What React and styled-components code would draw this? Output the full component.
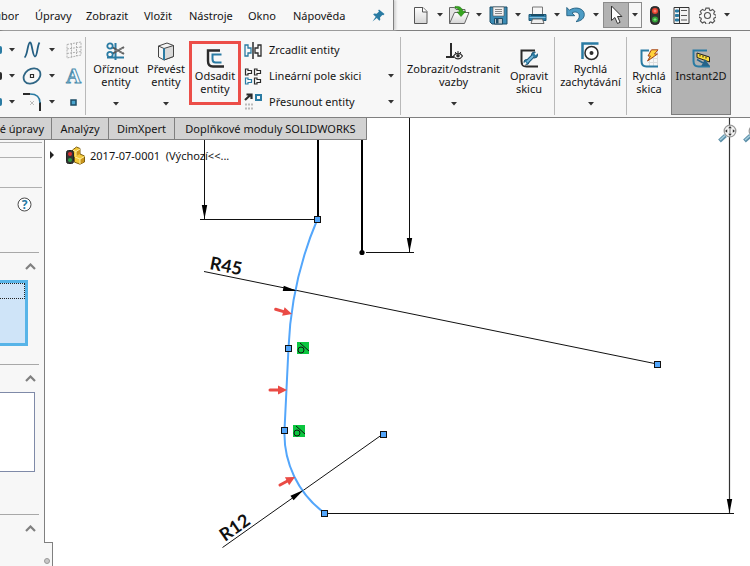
import React from 'react';
import styled, { createGlobalStyle } from 'styled-components';

const GlobalStyle = createGlobalStyle`
    * {
        box-sizing: border-box;
    }
    body {
        margin: 0;
        color: #141414;
        background: #fff;
        font-family: "Noto Sans", "Open Sans", sans-serif;
        font-size: 11px;
        line-height: 13px;
    }
    button {
        margin: 0;
        padding: 0;
        border: 0;
        color: inherit;
        background: none;
        font: inherit;
        white-space: nowrap;
    }
    ul {
        margin: 0;
        padding: 0;
        list-style: none;
    }
    svg {
        display: block;
        flex: none;
    }
`;

const blue = '#2a7ba3';
const dark = '#2b2b2b';
const edge = '#808080';

const Page = styled.div`
    display: flex;
    flex-direction: column;
    min-height: 100vh;
    overflow: hidden;
`;

/* top bar */
const TopBar = styled.header`
    display: flex;
    height: 31px;
    background: #f7f7f7;
    border-bottom: 1px solid ${edge};
`;
const Menu = styled.nav`
    display: grid;
    grid-template-columns: 19px 16px 51px 58px 45px 59px 45px 75px 25px;
    align-items: center;
    padding-top: 1px;
    border-right: 1px solid ${edge};
    box-shadow: 2px 0 2px #d4d4d4;
`;
const MenuItem = styled.button`
    text-align: left;
`;
const ClippedItem = styled.div`
    display: flex;
    justify-content: flex-end;
    overflow: hidden;
`;
const QuickTools = styled.div`
    display: flex;
    align-items: center;
    padding-left: 16px;
`;
const SplitTool = styled.div`
    display: flex;
    align-items: center;
    width: 39px;
`;
const IconButton = styled.button`
    display: flex;
    align-items: center;
    justify-content: center;
    width: ${({ $w }) => $w || 20}px;
    height: 26px;
`;
const CaretButton = styled.button`
    display: flex;
    align-items: center;
    justify-content: center;
    width: ${({ $w }) => $w || 19}px;
    height: 24px;
`;
const SelectTool = styled.div`
    display: flex;
    margin-left: -2px;
    margin-right: 3px;
    border: 1px solid #8c8c8c;

    ${IconButton} {
        height: 24px;
        background: #b2b2b2;
        border-right: 1px solid #8c8c8c;
    }
`;

/* ribbon */
const Ribbon = styled.div`
    display: flex;
    height: 87px;
    padding-top: 6px;
    background: #f7f7f7;
    border-bottom: 1px solid ${edge};
`;
const Group = styled.div`
    display: flex;
    height: 78px;
    padding-left: ${({ $left }) => $left || 0}px;
    border-right: 1px solid #b9b9b9;
`;
const SketchGrid = styled.div`
    display: grid;
    grid-template-columns: 2px 20px 20px 20px 23px;
    grid-template-rows: repeat(3, 26px);
    align-items: center;
    justify-items: center;
    overflow: hidden;
`;
const Stub = styled.span`
    width: 2px;
    height: 8px;
    border-radius: 0 2px 2px 0;
    background: ${({ $color }) => $color};
`;
const BigButton = styled.button`
    display: flex;
    flex-direction: column;
    align-items: center;
    width: ${({ $w }) => $w}px;
    padding-top: ${({ $low }) => ($low ? 12 : 5)}px;

    svg {
        margin-bottom: 1px;
    }
`;
const Highlight = styled(BigButton)`
    height: 64px;
    margin-top: 4px;
    padding-top: 5px;
    border: 3px solid #ec4e48;
`;
const Active = styled(BigButton)`
    height: 78px;
    padding-top: 11px;
    background: #b2b2b2;
    border: 1px solid #7d7d7d;
`;
const CaretRow = styled.span`
    display: flex;
    align-items: center;
    height: 18px;
    margin-top: 7px;
`;
const ToolList = styled.div`
    display: grid;
    grid-template-columns: 28px 113px 18px;
    grid-template-rows: repeat(3, 26px);
    align-items: center;
`;
const ToolLabel = styled.button`
    padding-bottom: 2px;
    text-align: left;
`;

/* work area */
const Work = styled.main`
    display: grid;
    flex: 1;
    grid-template-columns: minmax(0, 1fr);
    overflow: hidden;
    background: #fff;

    > * {
        grid-area: 1 / 1;
    }
`;
const Canvas = styled.svg`
    width: 100%;
    height: 100%;
    min-height: 448px;
`;
const Overlay = styled.div`
    z-index: 1;
    display: flex;
    flex-direction: column;
`;
const OverlayTop = styled.div`
    display: flex;
    justify-content: space-between;
    height: 22px;
`;
const Tabs = styled.div`
    display: flex;
    background: #d2d2d2;
    border-bottom: 1px solid ${edge};
`;
const Tab = styled.button`
    display: flex;
    align-items: center;
    justify-content: ${({ $end }) => ($end ? 'flex-end' : 'center')};
    width: ${({ $w }) => $w}px;
    padding-right: ${({ $end }) => ($end ? 7 : 0)}px;
    overflow: hidden;
    border-right: 1px solid ${edge};
`;
const ViewTools = styled.div`
    display: flex;
    gap: 6px;
    margin-right: -12px;
    padding-top: 2px;
`;
const Columns = styled.div`
    display: flex;
    flex: 1;
`;
const Side = styled.aside`
    display: flex;
    flex-direction: column;
    width: 45px;
`;
const Panel = styled.div`
    flex: 1;
    background: #f7f7f7;
    border-right: 1px solid ${edge};
`;
const Strip = styled.div`
    height: ${({ $h }) => $h}px;
    margin-right: 2px;
    border-bottom: 1px solid #b0b0b0;
`;
const HelpRow = styled.div`
    display: flex;
    align-items: flex-start;
    justify-content: flex-end;
    height: 64px;
    padding: 9px 12px 0 0;
`;
const Section = styled.section`
    height: ${({ $h }) => $h}px;
    margin-right: 5px;
    border-top: 1px solid #a8a8a8;
`;
const Collapse = styled.button`
    display: flex;
    align-items: center;
    justify-content: flex-end;
    width: 100%;
    height: 27px;
    padding-right: 3px;
`;
const SelectionBox = styled.ul`
    width: 28px;
    height: 66px;
    background: #cfe4f8;
    border: solid #57b4e8;
    border-width: 3px 3px 3px 0;
`;
const Selection = styled.li`
    height: 16px;
    border: 1px dotted #222;
    border-left: 0;
`;
const ListBox = styled.ul`
    width: 35px;
    height: 80px;
    background: #fff;
    border: 1px solid #7f8aa8;
    border-left: 0;
`;
const Foot = styled.div`
    display: flex;
    width: 53px;
    height: 24px;
    background: #f7f7f7;
`;
const Ledge = styled.div`
    display: flex;
    align-items: center;
    width: 9px;
    margin-left: 44px;
    padding-top: 12px;
    border-top: 1px solid ${edge};
    border-right: 1px solid ${edge};
`;
const Dot = styled.span`
    width: 6px;
    height: 6px;
    background: #c8c8c8;
    border: 1px solid #999;
    border-radius: 50%;
`;
const TreeRow = styled.div`
    display: flex;
    align-items: center;
    height: 20px;
    margin-top: 5px;
    padding-left: 5px;
    white-space: pre;

    svg + svg {
        margin: 0 5px 0 11px;
    }
`;

/* icons */
const Caret = () => (
    <svg width="6" height="4"><path d="M0 0h6L3 3.6z" fill="#333" /></svg>
);
const Pin = () => (
    <svg width="13" height="13"><path d="M7 .5 12.5 5l-1.2 1.2-1-.2L8 8.4l.3 2.4-1 .9L4.800 9 .5 12.500 3.700 7.800 1.200 5.400l1-1L4.700 4.700 7 2.500 6.200 1.400z" fill={blue} /></svg>
);
const NewDoc = () => (
    <svg width="15" height="19">
        <defs><linearGradient id="paper" x2="0" y2="1"><stop stopColor="#fff" /><stop offset="1" stopColor="#d5d5d5" /></linearGradient></defs>
        <path d="M1.500 1.500h8.500l4 4v12h-12.500z" fill="url(#paper)" stroke="#555" />
        <path d="M9.500 1.500V6H14" fill="#fff" stroke="#555" />
    </svg>
);
const OpenDoc = () => (
    <svg width="21" height="20">
        <path d="M.5 18.500V2.500h5l1.500 2h9v4" fill="#e3e3e3" stroke="#666" />
        <path d="M.5 18.500 5.500 7.500h14.500l-4.500 11z" fill="url(#paper)" stroke="#666" />
        <path d="M6 1.500c4-.5 7 .5 8 5h2.500L12 11.500 8 7h2.500C10 4.500 9 3 6 3z" fill="#35a51e" stroke="#217a12" strokeWidth=".6" />
    </svg>
);
const Save = () => (
    <svg width="19" height="19">
        <path d="M1 1h17v17H3l-2-2z" fill="#3b8cb5" stroke="#1e4e69" />
        <path d="M4 1h11v9H4z" fill="#f2f2f2" stroke="#555" strokeWidth=".6" />
        <path d="M6 3.500h7M6 5.500h7M6 7.500h7" stroke="#888" />
        <path d="M5.500 12.500h8V18h-8z" fill="#b9c5cc" stroke="#1e4e69" />
        <path d="M7 13h2.500v4.500H7z" fill="#1e4e69" />
    </svg>
);
const Print = () => (
    <svg width="19" height="19">
        <path d="M4.500 9V1h10v8" fill="#f6f6f6" stroke="#777" />
        <path d="M1 8.500h17v6H1z" fill="#2d7fa9" stroke="#1f5876" />
        <path d="M3 8h13v2H3z" fill="#194d68" />
        <path d="M4.500 13h10l1.500 4.500H3z" fill="#eee" stroke="#666" />
        <path d="M1.500 11.500h16" stroke="#7fbbdb" />
    </svg>
);
const Undo = () => (
    <svg width="20" height="18">
        <path d="M.8 1.500v8.200h8L6 7c3.200-2 7.300-.8 7.300 3 0 2.300-1.300 3.900-3.300 5.700 5.500-.8 8.300-3.500 8.300-7.200C18.300 2.500 9.500-.2 3.400 4.200z" fill="#4d9cc5" stroke="#235f80" strokeWidth=".9" />
    </svg>
);
const Cursor = () => (
    <svg width="14" height="20"><path d="M2.500 1v14.500l3.400-3 2.600 6 2.600-1.200-2.600-5.800h4.400z" fill="#fff" stroke="#333" /></svg>
);
const Light = () => (
    <svg width="10" height="19">
        <rect x=".5" y=".5" width="9" height="18" rx="4" fill="#333" stroke="#222" />
        <circle cx="5" cy="5" r="3" fill="#e8402d" /><circle cx="5" cy="13.500" r="3" fill="#35a538" />
        <path d="M3.500 5h3M5 3.500v3" stroke="#ff9a8c" /><path d="M3.500 13.500h3M5 12v3" stroke="#88dc88" />
    </svg>
);
const Props = () => (
    <svg width="17" height="19">
        <path d="M1 1.500h15v16H1z" fill="#f4f4f4" stroke="#333" />
        <path d="M6.500 1.500v16" stroke="#333" />
        <path d="M2.500 4h3v2h-3zM2.500 8.500h3v2h-3zM2.500 13h3v2h-3z" fill={blue} stroke={blue} />
        <path d="M8 4.500h6M8 9.500h6M8 14h6" stroke="#555" strokeWidth="1.200" />
    </svg>
);
const Gear = () => (
    <svg width="17" height="17" viewBox="-9 -9 18 18" fill="none" stroke="#555" strokeWidth="1.200">
        <path d="M-1.700-7.800h3.400l.5 2 1.300.6 1.900-1.200 2.300 2.300-1.100 1.800.5 1.300 2 .5v2.500l-2 .6-.6 1.400 1.100 1.800-2.200 2.100-1.900-1.100-1.300.5-.5 2.100h-3.400l-.5-2.100-1.300-.5-1.900 1.100-2.200-2.200 1.100-1.900-.6-1.200-2-.6v-2.600l2-.6.6-1.200-1.100-1.900 2.300-2.200 1.800 1.100 1.300-.5z" />
        <circle r="3.200" />
    </svg>
);
const Spline = () => (
    <svg width="18" height="18" fill="none" stroke="#245f83" strokeWidth="1.800"><path d="M1.500 16.500C4.500 15 4.500 2.500 6.800 1.500S9.500 15.500 12 15.500 14 5 16.500 1.500" /></svg>
);
const Ellipse = () => (
    <svg width="20" height="18" fill="none">
        <ellipse cx="10" cy="9" rx="9" ry="7" transform="rotate(-35 10 9)" stroke="#2f6685" strokeWidth="1.800" />
        <path d="M8.500 7.500h3v3h-3z" fill="#fff" stroke={dark} strokeWidth="1.200" />
    </svg>
);
const Fillet = () => (
    <svg width="20" height="20" fill="none">
        <path d="M1 2h7M18 10v9" stroke={dark} strokeWidth="2" />
        <path d="M8 2c7 0 10 4 10 9" stroke={blue} strokeWidth="1.500" />
        <path d="m8 9 4 4m0-4-4 4" stroke="#bbb" />
    </svg>
);
const Plane = () => (
    <svg width="16" height="18" fill="none" stroke="#b0b0b0" strokeDasharray="2 1"><path d="M1 3.500 15 1v13L1 17zM5.500 2.500v14M10.500 2v13M1 8l14-2M1 12.500l14-2" /></svg>
);
const Letter = () => (
    <svg width="18" height="18"><text x="1" y="16" fontSize="21" fontFamily="Liberation Serif" fontWeight="bold" fill="#f7fbff" stroke="#4c8dad" strokeWidth="1">A</text></svg>
);
const Point = () => (
    <svg width="7" height="7"><path d="M1 1h5v5H1z" fill="#4aa5cf" stroke="#1d4c66" strokeWidth="1.500" /></svg>
);
const Trim = () => (
    <svg width="20" height="19" fill="none">
        <path d="M9.500 1v17M1 15.500h17" stroke={blue} strokeWidth="2" />
        <path d="m6 5 12 7M6 12l12-7" stroke="#555" strokeWidth="2" />
        <path d="M9 8.500 18 6M9 8.500l9 2.500" stroke="#888" />
        <circle cx="4" cy="4" r="2.700" stroke={blue} strokeWidth="1.800" /><circle cx="4" cy="12.500" r="2.700" stroke={blue} strokeWidth="1.800" />
    </svg>
);
const Convert = () => (
    <svg width="18" height="19">
        <path d="M1.500 4 10 1l6.500 2.500v11L7 18l-5.500-3z" fill="#f4f4f4" stroke="#444" />
        <path d="M7 6.500 16.500 3.500v11L7 18z" fill="#d9d9d9" stroke="#444" />
        <path d="M1.500 4 7 6.500" stroke="#444" /><path d="M7 6.500V18" stroke={blue} strokeWidth="2" />
    </svg>
);
const Offset = () => (
    <svg width="19" height="19" fill="none">
        <path d="M14 1.500H2V12c0 4 2 5.500 5 5.500h11" stroke={dark} strokeWidth="2.400" />
        <path d="M15.500 5.500h-9V10c0 2.500 1 3.500 3 3.500h6" stroke={blue} strokeWidth="2" />
    </svg>
);
const Mirror = () => (
    <svg width="18" height="17" fill="none" strokeWidth="1.300">
        <path d="M1 3h3v3h3v5H4v3H1z" stroke={blue} /><path d="M17 3h-3v3h-3v5h3v3h3z" stroke={dark} /><path d="M9 0v17" stroke={dark} strokeWidth="1.500" />
    </svg>
);
const Pattern = () => (
    <svg width="18" height="17" fill="none" strokeWidth="1.200" stroke={dark}>
        <path d="M1.500 1h2.500v1.500h3.500v3H4V7H1.500zM10.500 1h2.500v1.500h3.500v3H13V7h-2.500zM10.500 10h2.500v1.500h3.500v3H13V16h-2.500z" /><path d="M1.500 10h2.500v1.500h3.500v3H4V16H1.500z" stroke={blue} />
    </svg>
);
const Move = () => (
    <svg width="19" height="18" fill="none">
        <path d="M1 7 7 1.500M2.500 1.500h5V6" stroke={dark} strokeWidth="2.200" />
        <path d="M12 2h5v5h-5z" stroke={blue} strokeWidth="2" />
        <path d="M1 11.500h8M1 15.500h8" stroke="#bbb" strokeWidth="2" strokeDasharray="2 1" />
    </svg>
);
const Eye = () => (
    <svg width="18" height="19" fill="none">
        <path d="M1 15h8M6 1v14" stroke={dark} strokeWidth="2" />
        <path d="M8.500 14c2.500-3.800 6.500-3.800 9 0-2.500 3.800-6.500 3.800-9 0z" fill="#fff" stroke={dark} strokeWidth="1.200" />
        <circle cx="13" cy="13.800" r="1.800" fill={dark} /><path d="m10 10 1 1m2-2v1.500m3-.5-1 1" stroke={dark} />
    </svg>
);
const Repair = () => (
    <svg width="19" height="19" fill="none">
        <path d="M15 1.500H1.500V12c0 4 2 5.500 5 5.500H18" stroke={dark} strokeWidth="2" />
        <path d="m7 13 6-6" stroke="#1f5f83" strokeWidth="4" /><circle cx="6.500" cy="13" r="2.500" fill={blue} stroke="#1f5573" /><circle cx="14.500" cy="6" r="3" fill={blue} stroke="#1f5573" />
        <path d="m7 13 6-6" stroke="#77b7d8" strokeWidth="1.800" /><path d="m15 5.500 3-3M6 13.500l-2.500 2.500" stroke="#f7f7f7" strokeWidth="2" />
    </svg>
);
const Snap = () => (
    <svg width="19" height="19" fill="none">
        <path d="M17.500 1.500h-16V17" stroke={blue} strokeWidth="2.500" />
        <circle cx="10.500" cy="11" r="6.500" fill="#fff" stroke={dark} strokeWidth="1.500" /><circle cx="10.500" cy="11" r="2" fill={dark} />
    </svg>
);
const QuickSketch = () => (
    <svg width="19" height="19" fill="none">
        <path d="M8 5.500h10M8 9.500h10M8 13.500h10M9.500 2v15M13.500 2v15M17.500 2v15" stroke="#ddd" />
        <path d="M9 1.500H1.500V12c0 4 2 5.500 5 5.500H18" stroke={blue} strokeWidth="2" />
        <path d="M11.500.8h6.500L14.500 5h3L7.500 12l3-5H8z" fill="#ffd23a" stroke="#a5431a" />
    </svg>
);
const Instant = () => (
    <svg width="19" height="19" fill="none">
        <path d="M15 1.500H1.500V12c0 4 2 5.500 5 5.500H18" stroke={blue} strokeWidth="2" />
        <path d="m5 4 12.500 4v5L5 8.500z" fill="#ffe13a" stroke="#222" /><path d="m8 5.500v2m3-1v2m3-1v2" stroke="#222" />
        <path d="m5 10.500 8 4.500m0-3.500 3.500 5-6-.2z" stroke="#24638a" strokeWidth="1.500" fill="#24638a" />
    </svg>
);
const Magnifier = () => (
    <svg width="19" height="19" fill="none">
        <path d="m1.500 17 6-5.500" stroke="#5c8fa8" strokeWidth="4" /><path d="m2 16 5-4.500" stroke="#a6cfdf" strokeWidth="1.500" />
        <circle cx="12" cy="7" r="5.800" fill="#f5f5f5" stroke="#9a9a9a" strokeWidth="1.300" />
        <path d="m12 2 1.800 2.200h-3.600zM12 12l1.800-2.200h-3.600zM7 7l2.200-1.800v3.600zM17 7l-2.200-1.800v3.600z" fill="#333" />
        <path d="M12 4v6" stroke="#777" />
    </svg>
);
const Help = () => (
    <svg width="15" height="15">
        <circle cx="7.500" cy="7.500" r="6.500" fill="#fff" stroke="#4b4b4b" />
        <text x="7.500" y="12" textAnchor="middle" fontSize="12" fontWeight="bold" fill={blue}>?</text>
    </svg>
);
const Chevron = () => (
    <svg width="11" height="7"><path d="m1 6 4.500-4.500L10 6" fill="none" stroke="#808080" strokeWidth="2.200" /></svg>
);
const TreeArrow = () => (
    <svg width="5" height="8"><path d="M0 0v8l4-4z" fill="#222" /></svg>
);
const Part = () => (
    <svg width="19" height="19">
        <path d="m6.500 4 4-3 3.500 1.500V8l4.500 2v6L14 18.200l-5.500-2V11l-2-1z" fill="#f3c93a" stroke="#7d5e10" />
        <path d="M14 3v5l-4 2V5.500zM18 10.500V16l-4 2v-5z" fill="#c9951c" />
        <path d="m7 4.200 3 1.300L14 3M10 5.500V10M9 11l5 2 4.500-2.500M14 13v5" fill="none" stroke="#fff0a0" />
        <rect x=".5" y="4.500" width="7" height="13" rx="2" fill="#333" stroke="#222" />
        <circle cx="4" cy="8" r="2" fill="#dc2f32" /><circle cx="4" cy="14" r="2" fill="#2e9c45" />
    </svg>
);

/* sketch, in window coordinates */
const handles = [[317, 219], [288, 348], [284, 430], [383, 434], [324, 513], [657, 364]];
const relations = [[297, 342], [293, 425]];
const offsetArrows = [[292, 314, 16], [287, 390, 0], [295, 477, -28]];
const dimArrows = [[204.500, 219, 90], [409.500, 252, 90], [729.500, 513, 90], [297, 291, 11], [303.500, 490, -35]];

const Sketch = () => (
    <Canvas>
        <g transform="translate(0 -118)">
            <g stroke="#111" fill="none">
                <path d="M204.500 118v101M200 219.500h117M409.500 118v134M366 252.500h48M324 513.500h410" shapeRendering="crispEdges" />
                <path d="M729.500 118v395" stroke="#333" strokeWidth="1.200" />
                <path d="M318 118v101M362 118v134" strokeWidth="2" stroke="#000" />
                <path d="M204 271.500 657 364M222.500 547.500 383 434" />
            </g>
            <circle cx="362" cy="252.500" r="2.600" />
            <path d="M317.500 219A369 369 0 0 0 288.500 348L284.500 430A98.600 98.600 0 0 0 324.500 513" fill="none" stroke="#53a6fb" strokeWidth="2" />
            {dimArrows.map(([x, y, a]) => (
                <path key={x} d="M0 0-14-2.700V2.700z" transform={`translate(${x} ${y}) rotate(${a})`} />
            ))}
            {offsetArrows.map(([x, y, a]) => (
                <g key={y} transform={`translate(${x} ${y}) rotate(${a})`} fill="#ea4b45">
                    <path d="M-17 0h10" stroke="#ea4b45" strokeWidth="3" strokeLinecap="round" />
                    <path d="M0 0-9-4.500V4.500z" />
                </g>
            ))}
            {relations.map(([x, y]) => (
                <g key={y} transform={`translate(${x} ${y})`} fill="none" stroke="#111">
                    <path d="M0 0h12v12H0z" fill="#0bc63f" stroke="none" />
                    <circle cx="4" cy="8" r="3" /><path d="m3 1 9 8" />
                </g>
            ))}
            {handles.map(([x, y]) => (
                <rect key={x} x={x - 2.500} y={y - 2.500} width="6" height="6" fill="#53a6fb" stroke="#111" />
            ))}
            <g fontFamily="Lato, sans-serif" fontSize="18" fontWeight="bold" fill="#111">
                <text transform="translate(209 269) rotate(11)">R45</text>
                <text transform="translate(225 542) rotate(-35)">R12</text>
            </g>
        </g>
    </Canvas>
);

const quick = [['Nový', NewDoc], ['Otevřít', OpenDoc], ['Uložit', Save], ['Tisk', Print], ['Zpět', Undo]];
const menus = ['Úpravy', 'Zobrazit', 'Vložit', 'Nástroje', 'Okno', 'Nápověda'];
const sketchRows = [['Splajn', Spline, Plane, blue], ['Elipsa', Ellipse, Letter, dark], ['Zaoblení', Fillet, Point, blue]];
const listTools = [['Zrcadlit entity', Mirror], ['Lineární pole skici', Pattern], ['Přesunout entity', Move]];

const Drop = ({ label, w }) => (
    <CaretButton $w={w} aria-label={label}><Caret /></CaretButton>
);

const Big = ({ box: Box = BigButton, icon: Icon, lines, drop, ...rest }) => (
    <Box {...rest}>
        <Icon />
        {lines.map(line => <span key={line}>{line}</span>)}
        {drop && <CaretRow><Caret /></CaretRow>}
    </Box>
);

const App = () => (
    <Page>
        <GlobalStyle />
        <TopBar>
            <Menu>
                <ClippedItem><MenuItem>Soubor</MenuItem></ClippedItem>
                <span />
                {menus.map(name => <MenuItem key={name}>{name}</MenuItem>)}
                <IconButton aria-label="Připnout"><Pin /></IconButton>
            </Menu>
            <QuickTools>
                {quick.map(([name, Icon]) => (
                    <SplitTool key={name}>
                        <IconButton aria-label={name}><Icon /></IconButton>
                        <Drop label={`${name}: možnosti`} />
                    </SplitTool>
                ))}
                <SelectTool>
                    <IconButton $w={25} aria-label="Vybrat"><Cursor /></IconButton>
                    <Drop w={12} label="Vybrat: možnosti" />
                </SelectTool>
                <IconButton aria-label="Přestavět"><Light /></IconButton>
                <IconButton $w={32} aria-label="Vlastnosti"><Props /></IconButton>
                <IconButton aria-label="Nastavení"><Gear /></IconButton>
                <Drop label="Nastavení: možnosti" />
            </QuickTools>
        </TopBar>
        <Ribbon>
            <Group>
                <SketchGrid>
                    {sketchRows.map(([name, Left, Right, color]) => (
                        <React.Fragment key={name}>
                            <Stub $color={color} />
                            <Drop label="Další" />
                            <IconButton aria-label={name}><Left /></IconButton>
                            <Drop label={`${name}: možnosti`} />
                            <IconButton aria-label="Nástroj skici"><Right /></IconButton>
                        </React.Fragment>
                    ))}
                </SketchGrid>
            </Group>
            <Group $left={3}>
                <Big $w={54} icon={Trim} lines={['Oříznout', 'entity']} drop />
                <Big $w={46} icon={Convert} lines={['Převést', 'entity']} drop />
                <Big box={Highlight} $w={52} icon={Offset} lines={['Odsadit', 'entity']} />
                <ToolList>
                    {listTools.map(([name, Icon], i) => (
                        <React.Fragment key={name}>
                            <IconButton aria-hidden="true" tabIndex={-1} $w={24}><Icon /></IconButton>
                            <ToolLabel>{name}</ToolLabel>
                            {i > 0 ? <Drop w={18} label={`${name}: možnosti`} /> : <span />}
                        </React.Fragment>
                    ))}
                </ToolList>
            </Group>
            <Group $left={2}>
                <Big $w={101} icon={Eye} lines={['Zobrazit/odstranit', 'vazby']} drop />
                <Big $w={50} $low icon={Repair} lines={['Opravit', 'skicu']} />
            </Group>
            <Group>
                <Big $w={71} icon={Snap} lines={['Rychlá', 'zachytávání']} drop />
            </Group>
            <Big $w={44} $low icon={QuickSketch} lines={['Rychlá', 'skica']} />
            <Big box={Active} $w={60} icon={Instant} lines={['Instant2D']} />
        </Ribbon>
        <Work>
            <Sketch />
            <Overlay>
                <OverlayTop>
                    <Tabs>
                        <Tab $w={52} $end>Přímé úpravy</Tab>
                        <Tab $w={57}>Analýzy</Tab>
                        <Tab $w={66}>DimXpert</Tab>
                        <Tab $w={192}>Doplňkové moduly SOLIDWORKS</Tab>
                    </Tabs>
                    <ViewTools>
                        <IconButton $w={19} aria-label="Přizpůsobit"><Magnifier /></IconButton>
                        <IconButton $w={19} aria-label="Zvětšit výběr"><Magnifier /></IconButton>
                    </ViewTools>
                </OverlayTop>
                <Columns>
                    <Side>
                        <Panel>
                            <Strip $h={3} />
                            <Strip $h={15} />
                            <Strip $h={30} />
                            <HelpRow><button aria-label="Nápověda"><Help /></button></HelpRow>
                            <Section $h={112}>
                                <Collapse aria-label="Sbalit"><Chevron /></Collapse>
                                <SelectionBox><Selection /></SelectionBox>
                            </Section>
                            <Section $h={150}>
                                <Collapse aria-label="Sbalit"><Chevron /></Collapse>
                                <ListBox />
                            </Section>
                            <Section $h={28}>
                                <Collapse aria-label="Sbalit"><Chevron /></Collapse>
                            </Section>
                        </Panel>
                        <Foot><Ledge><Dot /></Ledge></Foot>
                    </Side>
                    <TreeRow><TreeArrow /><Part /><span>2017-07-0001  (Výchozí&lt;&lt;...</span></TreeRow>
                </Columns>
            </Overlay>
        </Work>
    </Page>
);

export default App;
